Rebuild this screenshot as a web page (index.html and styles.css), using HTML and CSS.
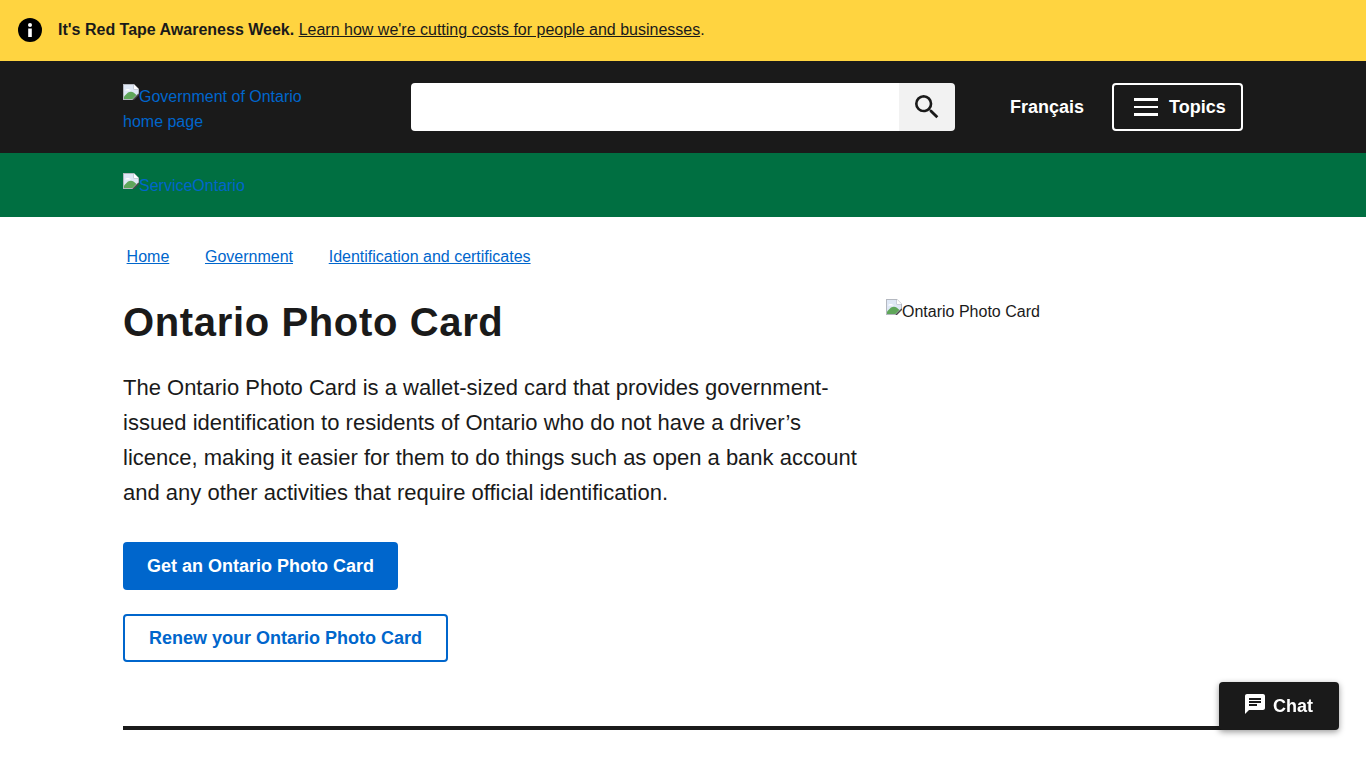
FILE: index.html
```html
<!DOCTYPE html>
<html lang="en">

<head>
    <meta charset="UTF-8">
    <title>Ontario Photo Card | ontario.ca</title>
    <link rel="stylesheet" href="styles.css">
</head>

<body>
    <svg class="sprite" width="0" height="0" aria-hidden="true">
        <symbol id="broken" viewBox="0 0 16 16">
            <path d="M0 0H11L16 5V10L10 16H0Z" fill="#b4b8c0" />
            <path d="M1 1H10.5V5.5H15V9.5L9.5 15H1Z" fill="#dfe8f6" />
            <path d="M1 15V12.5L5 8.5C7 7.5 9 7.5 10.5 8.5L13.5 11L9.5 15Z" fill="#5fa65a" />
            <path d="M2 6.5C3 4.5 6 4.5 8 6.5H2Z" fill="#fff" />
            <path d="M11 0.5L15.5 5H11Z" fill="#fff" />
            <path d="M10 16L16 10" stroke="#4a4a4a" stroke-width="1.4" />
        </symbol>
    </svg>

    <div class="alert">
        <svg class="alert-icon" width="24" height="24" viewBox="0 0 24 24">
            <circle cx="12" cy="12" r="12" fill="#000" />
            <circle cx="12" cy="7" r="2" fill="#fff" />
            <rect x="10.2" y="10.5" width="3.6" height="8.5" fill="#fff" />
        </svg>
        <p><strong>It's Red Tape Awareness Week.</strong> <a href="#">Learn how we're cutting costs for people and businesses</a>.</p>
    </div>

    <header class="top-bar">
        <div class="container top-row">
            <a class="logo-link" href="#"><svg class="broken" width="16" height="16"><use href="#broken" /></svg>Government of Ontario home page</a>
            <form class="search">
                <input type="text" aria-label="Search">
                <button type="button" aria-label="Search">
                    <svg width="32" height="32" viewBox="0 0 24 24">
                        <path fill="#1a1a1a" d="M15.5 14h-.79l-.28-.27A6.47 6.47 0 0 0 16 9.5 6.5 6.5 0 1 0 9.5 16c1.61 0 3.09-.59 4.23-1.57l.27.28v.79l5 4.99L20.49 19l-4.99-5zm-6 0C7.01 14 5 11.99 5 9.5S7.01 5 9.5 5 14 7.01 14 9.5 11.99 14 9.5 14z" />
                    </svg>
                </button>
            </form>
            <a class="lang" href="#">Français</a>
            <button class="topics" type="button">
                <span class="burger"><i></i><i></i><i></i></span>
                Topics
            </button>
        </div>
    </header>

    <div class="sub-bar">
        <div class="container">
            <a class="sub-logo" href="#"><svg class="broken" width="16" height="16"><use href="#broken" /></svg>ServiceOntario</a>
        </div>
    </div>

    <main class="container">
        <nav class="crumbs">
            <a href="#">Home</a>
            <a href="#">Government</a>
            <a href="#">Identification and certificates</a>
        </nav>

        <div class="hero">
            <div class="hero-text">
                <h1>Ontario Photo Card</h1>
                <p class="lead">The Ontario Photo Card is a wallet-sized card that provides government-issued identification to residents of Ontario who do not have a driver’s licence, making it easier for them to do things such as open a bank account and any other activities that require official identification.</p>
                <div class="actions">
                    <a class="btn btn-primary" href="#">Get an Ontario Photo Card</a>
                    <a class="btn btn-secondary" href="#">Renew your Ontario Photo Card</a>
                </div>
            </div>
            <div class="hero-img"><svg class="broken" width="16" height="16"><use href="#broken" /></svg>Ontario Photo Card</div>
        </div>

        <hr class="rule">
    </main>

    <button class="chat" type="button">
        <svg width="24" height="24" viewBox="0 0 24 24">
            <path fill="#fff" d="M20 2H4c-1.1 0-2 .9-2 2v18l4-4h14c1.1 0 2-.9 2-2V4c0-1.1-.9-2-2-2zM6 9h12v2H6V9zm8 5H6v-2h8v2zm4-6H6V6h12v2z" />
        </svg>
        Chat
    </button>
</body>

</html>
```

FILE: styles.css
```css
* {
    box-sizing: border-box;
}

body {
    margin: 0;
    background: #fff;
    color: #1a1a1a;
    font-family: "Liberation Sans", Arial, sans-serif;
    font-size: 16px;
}

.sprite {
    display: block;
    height: 0;
}

.container {
    width: 1120px;
    margin: 0 auto;
}

.broken {
    vertical-align: top;
}

/* alert */
.alert {
    display: flex;
    align-items: center;
    height: 61px;
    padding-left: 18px;
    padding-bottom: 1px;
    background: #ffd440;
}

.alert-icon {
    flex: none;
    margin-right: 16px;
}

.alert p {
    margin: 0;
    line-height: 24px;
}

.alert a {
    color: #1a1a1a;
}

/* header */
.top-bar {
    height: 92px;
    background: #1a1a1a;
}

.top-row {
    display: flex;
    align-items: center;
    height: 92px;
}

.logo-link {
    flex: none;
    align-self: flex-start;
    width: 200px;
    margin-top: 23px;
    margin-right: 88px;
    color: #0066cc;
    line-height: 25px;
    text-decoration: none;
}

.search {
    flex: none;
    display: flex;
    width: 544px;
    height: 48px;
    margin-right: 55px;
}

.search input {
    flex: 1;
    min-width: 0;
    border: none;
    border-radius: 4px 0 0 4px;
    background: #fff;
}

.search button {
    display: flex;
    align-items: center;
    justify-content: center;
    width: 56px;
    border: none;
    border-radius: 0 4px 4px 0;
    background: #f2f2f2;
    padding: 0;
}

.lang {
    color: #fff;
    font-size: 18px;
    font-weight: bold;
    text-decoration: none;
}

.topics {
    flex: none;
    display: flex;
    align-items: center;
    gap: 11px;
    width: 131px;
    height: 48px;
    margin-left: auto;
    padding: 0 0 0 20px;
    border: 2px solid #fff;
    border-radius: 4px;
    background: none;
    color: #fff;
    font-family: inherit;
    font-size: 18px;
    font-weight: bold;
}

.burger {
    display: flex;
    flex-direction: column;
    gap: 5px;
    width: 24px;
}

.burger i {
    display: block;
    height: 2.5px;
    background: #fff;
}

/* service bar */
.sub-bar {
    height: 64px;
    padding-top: 20px;
    background: #006f41;
}

.sub-logo {
    color: #0066cc;
    line-height: 26px;
    text-decoration: none;
}

/* main */
.crumbs {
    display: flex;
    gap: 35.7px;
    padding: 30px 0 0 3.6px;
    line-height: 20px;
}

.crumbs a {
    color: #0066cc;
}

.hero {
    display: flex;
    margin-top: 29px;
}

.hero-text {
    width: 763px;
}

h1 {
    margin: 0;
    font-size: 40px;
    line-height: 52px;
    letter-spacing: 0.64px;
}

.lead {
    margin: 22px 0 0;
    width: 740px;
    font-size: 22px;
    line-height: 35px;
}

.actions {
    display: flex;
    flex-direction: column;
    align-items: flex-start;
    gap: 24px;
    margin-top: 32px;
}

.btn {
    display: flex;
    align-items: center;
    height: 48px;
    border-radius: 4px;
    font-size: 18px;
    font-weight: bold;
    text-decoration: none;
}

.btn-primary {
    padding: 0 24px;
    background: #0066cc;
    color: #fff;
}

.btn-secondary {
    padding: 0 24px;
    border: 2px solid #0066cc;
    color: #0066cc;
}

.hero-img {
    margin-top: 3px;
    line-height: 25px;
}

.rule {
    height: 4px;
    margin: 64px 0 0;
    border: none;
    background: #1a1a1a;
}

/* floating chat button */
.chat {
    position: fixed;
    right: 27px;
    bottom: 38px;
    display: flex;
    align-items: center;
    gap: 6px;
    width: 120px;
    height: 48px;
    padding: 0 0 0 24px;
    border: none;
    border-radius: 4px;
    background: #1a1a1a;
    color: #fff;
    font-family: inherit;
    font-size: 18px;
    font-weight: bold;
    box-shadow: 0 2px 6px rgba(0, 0, 0, 0.4);
}

.chat svg {
    margin-top: -4px;
}
```
